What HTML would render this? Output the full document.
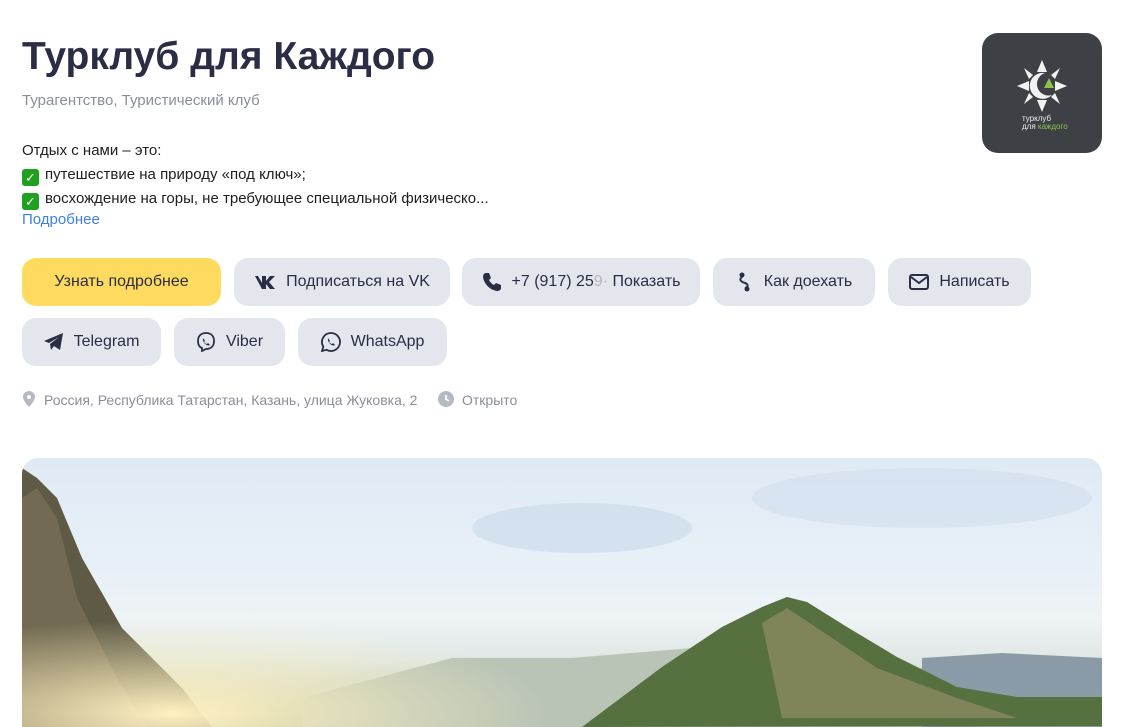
<!DOCTYPE html>
<html><head><meta charset="utf-8"><style>
*{margin:0;padding:0;box-sizing:border-box}
body{width:1127px;height:727px;overflow:hidden;background:#fff;font-family:"Liberation Sans","DejaVu Sans",sans-serif;color:#21201f;position:relative}
.a{position:absolute}
h1{position:absolute;left:22px;top:35px;font-size:39px;font-weight:bold;color:#2b2d45;letter-spacing:0px}
.sub{left:22px;top:92px;font-size:15px;color:#8a8e99}
.desc{left:22px;top:139px;font-size:15px;line-height:24px;color:#21201f}
.chk{display:inline-block;width:17px;height:17px;background:#1fa01f;border-radius:3px;color:#fff;font-size:13px;line-height:17px;text-align:center;vertical-align:-3px;margin-right:6px;font-weight:bold}
.more{left:22px;top:211px;font-size:15px;color:#3d7fe0}
.btn{position:absolute;height:48px;border-radius:14px;background:#e3e6ed;display:flex;align-items:center;justify-content:center;font-size:16px;color:#2b2d45;gap:10px}
.btn svg{flex:none}
.meta{top:391px;font-size:14px;color:#8a8e99}
.logo{left:982px;top:33px;width:120px;height:120px;border-radius:16px;background:#3d4146}
.photo{left:22px;top:458px;width:1080px;height:269px;border-radius:16px 16px 0 0;overflow:hidden;
background:linear-gradient(180deg,#dfeaf5 0%,#e8f0f7 40%,#eef3f5 60%,#dfe7e4 75%,#a8b59c 100%)}
</style></head><body>
<h1>Турклуб для Каждого</h1>
<div class="a sub">Турагентство, Туристический клуб</div>
<div class="a desc">Отдых с нами – это:<br><span class="chk">✓</span>путешествие на природу «под ключ»;<br><span class="chk">✓</span>восхождение на горы, не требующее специальной физическо...</div>
<div class="a more">Подробнее</div>

<div class="a logo">
<svg width="120" height="120" viewBox="0 0 120 120">
<g fill="#f2f2f2"><polygon points="60,27 65,39 55,39"/><polygon points="60,79 65,67 55,67"/><polygon points="35,53 47,48 47,58"/><polygon points="85,53 73,48 73,58"/><polygon points="42,35 51,42 47,46"/><polygon points="78,35 69,42 73,46"/><polygon points="42,71 51,64 47,60"/><polygon points="78,71 69,64 73,60"/></g>
<path d="M63 40a13 13 0 1 0 7 22a11 11 0 1 1 -7 -22z" fill="#f2f2f2"/>
<polygon points="67,45 72,55 62,55" fill="#8bc34a"/>
<text x="40" y="88" font-size="8" fill="#eee" font-family="Liberation Sans">турклуб</text>
<text x="40" y="96" font-size="8" fill="#eee" font-family="Liberation Sans">для <tspan fill="#8bc34a">каждого</tspan></text>
</svg></div>

<div class="btn" style="left:22px;top:258px;width:199px;background:#fedb5e">Узнать подробнее</div>
<div class="btn" style="left:234px;top:258px;width:216px"><svg width="22" height="14" viewBox="0 0 22 14"><path d="M0 1h4l4 7V1h4v5l4-5h5l-6 6 6 7h-5l-4-5v5h-4l-7-13z" fill="#2b2d45"/></svg>Подписаться на VK</div>
<div class="btn" style="left:462px;top:258px;width:238px"><svg width="20" height="20" viewBox="0 0 20 20"><path d="M4 1l3 0 2 5-2 2c1 2 3 4 5 5l2-2 5 2v3c0 2-2 3-4 3C8 18 2 12 1 5 1 3 2 1 4 1z" fill="#2b2d45"/></svg><span>+7 (917) 25<span style="color:#b5b8c2">9·</span> Показать</span></div>
<div class="btn" style="left:713px;top:258px;width:162px"><svg width="18" height="22" viewBox="0 0 18 22"><circle cx="6" cy="4" r="2.5" fill="#2b2d45"/><circle cx="11" cy="18" r="2.5" fill="#2b2d45"/><path d="M6 6c-4 3 0 5 3 6s4 4 0 5" fill="none" stroke="#2b2d45" stroke-width="2"/></svg>Как доехать</div>
<div class="btn" style="left:888px;top:258px;width:143px"><svg width="20" height="16" viewBox="0 0 20 16"><rect x="1" y="1" width="18" height="14" rx="2" fill="none" stroke="#2b2d45" stroke-width="2"/><path d="M2 3l8 6 8-6" fill="none" stroke="#2b2d45" stroke-width="2"/></svg>Написать</div>

<div class="btn" style="left:22px;top:318px;width:139px"><svg width="20" height="18" viewBox="0 0 20 18"><path d="M0 8L19 0 16 17 10 13 7 17 6 11 15 4 5 10z" fill="#2b2d45"/></svg>Telegram</div>
<div class="btn" style="left:174px;top:318px;width:111px"><svg width="20" height="20" viewBox="0 0 20 20"><path d="M10 1c5 0 8 3 8 8s-3 8-8 8l-4 2v-3C3 15 2 12 2 9c0-5 3-8 8-8z" fill="none" stroke="#2b2d45" stroke-width="1.8"/><path d="M7 6l2 3-1 1c1 1 2 2 3 2l1-1 2 2c-3 2-8-3-7-7z" fill="#2b2d45"/></svg>Viber</div>
<div class="btn" style="left:298px;top:318px;width:149px"><svg width="20" height="20" viewBox="0 0 20 20"><path d="M10 1a9 9 0 1 1-4.5 16.8L1 19l1.3-4.3A9 9 0 0 1 10 1z" fill="none" stroke="#2b2d45" stroke-width="1.8"/><path d="M7 6l2 3-1 1c1 1 2 2 3 2l1-1 2 2c-3 2-8-3-7-7z" fill="#2b2d45"/></svg>WhatsApp</div>

<div class="a meta" style="left:22px"><svg width="14" height="16" viewBox="0 0 14 16" style="vertical-align:-2px;margin-right:8px"><path d="M7 0a6 6 0 0 1 6 6c0 4-6 10-6 10S1 10 1 6a6 6 0 0 1 6-6z" fill="#b5b9c4"/><circle cx="7" cy="6" r="2" fill="#fff"/></svg>Россия, Республика Татарстан, Казань, улица Жуковка, 2</div>
<div class="a meta" style="left:438px"><svg width="16" height="16" viewBox="0 0 16 16" style="vertical-align:-2px;margin-right:8px"><circle cx="8" cy="8" r="8" fill="#b5b9c4"/><path d="M8 4v4l3 2" stroke="#fff" stroke-width="1.8" fill="none"/></svg>Открыто</div>

<div class="a photo">
<svg width="1080" height="269" viewBox="0 0 1080 269" preserveAspectRatio="none">
<defs><radialGradient id="sun" cx="0.14" cy="0.95" r="0.35"><stop offset="0" stop-color="#fff1c0"/><stop offset="1" stop-color="#fff1c0" stop-opacity="0"/></radialGradient></defs>
<ellipse cx="560" cy="70" rx="110" ry="25" fill="#c8d9ea" opacity="0.6"/>
<ellipse cx="900" cy="40" rx="170" ry="30" fill="#cddcec" opacity="0.5"/>
<path d="M280 240l150-40 120 0 120-10 60 20 H1080v59H280z" fill="#b9c4b6"/>
<path d="M900 200l80-5 100 5v69H900z" fill="#8a9aa6"/>
<path d="M560 269l80-60 60-40 40-20 25-10 20 5 40 25 50 30 60 30 60 10 85 0v29z" fill="#56703f"/>
<path d="M740 165l25-15 30 20 60 40 80 30 60 20H760z" fill="#8a8a62" opacity="0.8"/>
<path d="M0 10l15 10 20 20 25 60 40 70 60 60 30 39H0z" fill="#5e5a45"/>
<path d="M0 40l15 -10 20 30 20 80 40 80 30 49H0z" fill="#726a52"/>
<rect width="1080" height="269" fill="url(#sun)"/>
</svg>
</div>
</body></html>
